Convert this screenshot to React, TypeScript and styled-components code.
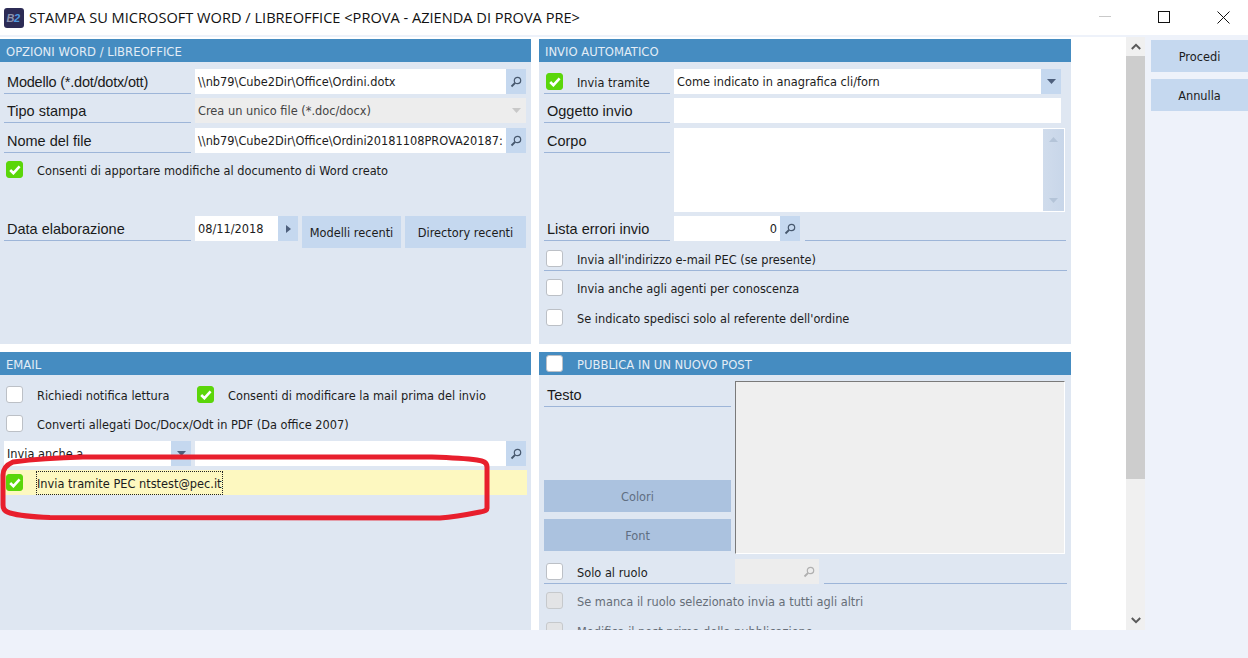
import React from "react";
import styled, { createGlobalStyle } from "styled-components";

const Global = createGlobalStyle`
  html, body { margin: 0; padding: 0; width: 1248px; height: 658px; overflow: hidden; background: #eef2fa; }
  * { box-sizing: border-box; }
`;

const UI = `"DejaVu Sans", "Liberation Sans", sans-serif`;

const Win = styled.div`
  width: 1248px;
  height: 658px;
  display: flex;
  flex-direction: column;
  background: #eef2fa;
  font-family: ${UI};
  font-stretch: condensed;
  font-size: 12.65px;
  color: #1c1c1c;
`;
const TitleBar = styled.header`
  height: 35px;
  flex: none;
  background: #fff;
  display: flex;
  align-items: center;
  padding-left: 4px;
`;
const TitleText = styled.div`
  margin-left: 5px;
  font-family: "Open Sans", sans-serif;
  font-stretch: normal;
  font-size: 14.6px;
  color: #111;
  white-space: nowrap;
  flex: 1;
  padding-bottom: 1px;
`;
const WinControl = styled.div`
  width: 59px;
  height: 35px;
  flex: none;
  padding: 0 0 1px 9px;
  display: flex;
  align-items: center;
  justify-content: center;
`;
const Main = styled.main`
  height: 595px;
  flex: none;
  display: flex;
`;
const ScrollArea = styled.div`
  width: 1126px;
  margin-top: 2px;
  background: #fff;
  overflow: hidden;
  position: relative;
`;
const PanelGrid = styled.div`
  display: grid;
  grid-template-columns: 531px 532px;
  grid-template-rows: 305px 290px;
  column-gap: 8px;
  row-gap: 8px;
  margin-top: 2px;
`;
const Panel = styled.section<{ $pad: number }>`
  background: #dfe7f2;
  padding-left: ${(p) => p.$pad}px;
  display: flex;
  flex-direction: column;
  align-items: flex-start;
`;
const PanelHead = styled.div<{ $pad: number }>`
  height: 23px;
  flex: none;
  align-self: stretch;
  margin-left: -${(p) => p.$pad}px;
  padding: 2px 0 0 6px;
  background: #458cc1;
  color: #e3edf6;
  font-size: 12.9px;
  display: flex;
  align-items: center;
  white-space: nowrap;
`;
const HeadCheck = styled(PanelHead)`
  padding: 0 0 0 7px;
  gap: 14px;
`;
const Row = styled.div<{ $top: number; $gap?: number }>`
  display: flex;
  align-items: flex-start;
  margin-top: ${(p) => p.$top}px;
  gap: ${(p) => p.$gap ?? 4}px;
  flex: none;
`;
const FieldLabel = styled.div<{ $w: number; $tight?: boolean }>`
  width: ${(p) => p.$w}px;
  height: 25px;
  flex: none;
  border-bottom: 1px solid #9db5d8;
  font-family: "Liberation Sans", sans-serif;
  font-stretch: normal;
  font-size: 14.5px;
  letter-spacing: ${(p) => (p.$tight ? "-0.2px" : "0")};
  line-height: 27px;
  padding-left: 3px;
  color: #1a1a1a;
  white-space: nowrap;
`;
const CheckLabelCell = styled.div<{ $w: number }>`
  width: ${(p) => p.$w}px;
  height: 25px;
  flex: none;
  border-bottom: 1px solid #9db5d8;
  padding: 4px 0 0 2px;
  display: flex;
  align-items: flex-start;
  gap: 14px;
`;
const CellText = styled.span`
  line-height: 19px;
  white-space: nowrap;
`;
const Rule = styled.div<{ $w: number }>`
  width: ${(p) => p.$w}px;
  height: 25px;
  flex: none;
  margin-left: 1px;
  border-bottom: 1px solid #9db5d8;
`;
const Input = styled.div<{ $w: number; $gray?: boolean; $right?: boolean }>`
  width: ${(p) => p.$w}px;
  height: 25px;
  flex: none;
  background: ${(p) => (p.$gray ? "#ededed" : "#fff")};
  color: ${(p) => (p.$gray ? "#444" : "#1c1c1c")};
  padding: 0 3px;
  line-height: 26px;
  white-space: nowrap;
  overflow: hidden;
  text-align: ${(p) => (p.$right ? "right" : "left")};
`;
const Joined = styled.div`
  display: flex;
  flex: none;
`;
const SideBtn = styled.div<{ $gray?: boolean }>`
  width: 20px;
  height: 25px;
  flex: none;
  background: ${(p) => (p.$gray ? "#ededed" : "#c5d8ef")};
  display: flex;
  align-items: center;
  justify-content: center;
`;
const PushBtn = styled.div<{ $w: number; $off?: boolean }>`
  width: ${(p) => p.$w}px;
  height: 32px;
  flex: none;
  padding-top: ${(p) => (p.$off ? 1 : 0)}px;
  background: ${(p) => (p.$off ? "#abc2df" : "#c5d8ef")};
  color: ${(p) => (p.$off ? "#5f6e82" : "#1c1c1c")};
  display: flex;
  align-items: center;
  justify-content: center;
`;
const CheckItem = styled.div<{ $left?: number; $off?: boolean; $w?: number }>`
  display: flex;
  align-items: center;
  gap: 14px;
  height: 17px;
  margin-left: ${(p) => p.$left ?? 0}px;
  ${(p) => (p.$w ? `width: ${p.$w}px;` : "")}
  white-space: nowrap;
  color: ${(p) => (p.$off ? "#666e78" : "#1c1c1c")};
`;
const CheckText = styled.span`
  padding-top: 2px;
`;
const Box = styled.span<{ $on?: boolean; $off?: boolean }>`
  width: 17px;
  height: 17px;
  flex: none;
  border-radius: 3px;
  border: 1px solid ${(p) => (p.$on ? "#5bd60a" : p.$off ? "#c6c9cc" : "#bcc0c6")};
  background: ${(p) => (p.$on ? "#5bd60a" : p.$off ? "#e3e4e6" : "#fff")};
  display: inline-flex;
  align-items: center;
  justify-content: center;
`;
const CheckRuleRow = styled.div<{ $top: number }>`
  width: 523px;
  height: 26px;
  margin-top: ${(p) => p.$top}px;
  padding: 5px 0 0 2px;
  border-bottom: 1px solid #9db5d8;
  flex: none;
`;
const YellowBar = styled.div`
  width: 523px;
  height: 25px;
  margin-top: 4px;
  background: #fdf8c0;
  display: flex;
  align-items: center;
  padding-left: 2px;
  gap: 14px;
  flex: none;
`;
const FocusText = styled.span`
  outline: 1px dotted #222;
  line-height: 23px;
  height: 22px;
  white-space: nowrap;
`;
const MemoBox = styled.div`
  width: 391px;
  height: 84px;
  flex: none;
  background: #fff;
  display: flex;
  justify-content: flex-end;
  padding: 1px;
`;
const MemoBar = styled.div`
  width: 21px;
  background: linear-gradient(90deg, #d0dcec, #c8d6e9);
  display: flex;
  flex-direction: column;
  justify-content: space-between;
  align-items: center;
  padding: 8px 0;
`;
const Column = styled.div`
  display: flex;
  flex-direction: column;
  flex: none;
  width: 187px;
  padding-top: 1px;
`;
const FontBtnStack = styled.div`
  display: flex;
  flex-direction: column;
  gap: 7px;
  margin-top: 73px;
`;
const Preview = styled.div`
  width: 330px;
  height: 173px;
  flex: none;
  background: #efefef;
  border-top: 1px solid #7a7a7a;
  border-left: 1px solid #7a7a7a;
  border-right: 1px solid #fff;
  border-bottom: 1px solid #fff;
`;
const ScrollBar = styled.div`
  width: 19px;
  margin-top: 2px;
  background: #f0f0f0;
  display: flex;
  flex-direction: column;
  flex: none;
`;
const ScrollBtn = styled.div`
  height: 19px;
  flex: none;
  display: flex;
  align-items: center;
  justify-content: center;
`;
const Thumb = styled.div`
  height: 423px;
  background: #cdcdcd;
  flex: none;
`;
const Spacer = styled.div`
  flex: 1;
`;
const Side = styled.aside`
  flex: 1;
  padding: 5px 0 0 6px;
  display: flex;
  flex-direction: column;
  gap: 7px;
`;
const RedMark = styled.svg`
  position: absolute;
  left: 0;
  top: 415px;
  pointer-events: none;
`;

const Search = ({ c = "#47586e" }: { c?: string }) => (
  <svg width="12" height="12" viewBox="0 0 12 12" fill="none" stroke={c}>
    <circle cx="7.5" cy="4.5" r="3.2" strokeWidth="1.2" />
    <path d="M5 7 L1.5 10.5" strokeWidth="1.8" />
  </svg>
);
const Down = ({ c = "#4d5f7c" }: { c?: string }) => (
  <svg width="9" height="5" viewBox="0 0 9 5">
    <path d="M0 0H9L4.5 5Z" fill={c} />
  </svg>
);
const Up = ({ c }: { c: string }) => (
  <svg width="9" height="5" viewBox="0 0 9 5">
    <path d="M0 5H9L4.5 0Z" fill={c} />
  </svg>
);
const Tick = () => (
  <svg width="12" height="10" viewBox="0 0 12 10" fill="none">
    <path d="M1.2 5 L4.4 8.2 L10.6 1.4" stroke="#fff" strokeWidth="2.6" />
  </svg>
);
const Check = ({ on, off }: { on?: boolean; off?: boolean }) => (
  <Box $on={on} $off={off}>{on && <Tick />}</Box>
);
const Chevron = ({ up }: { up?: boolean }) => (
  <svg width="10" height="7" viewBox="0 0 10 7" fill="none">
    <path d={up ? "M0.8 6 L5 1.8 L9.2 6" : "M0.8 1 L5 5.2 L9.2 1"} stroke="#5a5a5a" strokeWidth="2" />
  </svg>
);

export default function App() {
  return (
    <Win>
      <Global />
      <TitleBar>
        <svg width="20" height="20" viewBox="0 0 20 20">
          <rect width="20" height="20" rx="3" fill="#2c2b55" />
          <text x="2.5" y="14" fontFamily="Liberation Sans" fontStyle="italic" fontWeight="700" fontSize="11" fill="#8c93ad">B</text>
          <text x="10" y="14" fontFamily="Liberation Sans" fontStyle="italic" fontWeight="700" fontSize="11" fill="#4f9be0">2</text>
        </svg>
        <TitleText>STAMPA SU MICROSOFT WORD / LIBREOFFICE &lt;PROVA - AZIENDA DI PROVA PRE&gt;</TitleText>
        <WinControl>
          <svg width="12" height="2" viewBox="0 0 12 2"><path d="M0 .5H12" stroke="#c9c9c9" /></svg>
        </WinControl>
        <WinControl>
          <svg width="13" height="13" viewBox="0 0 13 13" fill="none"><rect x=".5" y=".5" width="11" height="11" stroke="#111" /></svg>
        </WinControl>
        <WinControl>
          <svg width="13" height="13" viewBox="0 0 13 13" fill="none"><path d="M.5 .5L12.5 12.5M12.5 .5L.5 12.5" stroke="#111" /></svg>
        </WinControl>
      </TitleBar>
      <Main>
        <ScrollArea>
          <PanelGrid>
            <Panel $pad={4}>
              <PanelHead $pad={4}>OPZIONI WORD / LIBREOFFICE</PanelHead>
              <Row $top={7}>
                <FieldLabel $w={187} $tight>Modello (*.dot/dotx/ott)</FieldLabel>
                <Joined>
                  <Input $w={311}>\\nb79\Cube2Dir\Office\Ordini.dotx</Input>
                  <SideBtn><Search /></SideBtn>
                </Joined>
              </Row>
              <Row $top={4}>
                <FieldLabel $w={187}>Tipo stampa</FieldLabel>
                <Joined>
                  <Input $w={311} $gray>Crea un unico file (*.doc/docx)</Input>
                  <SideBtn $gray><Down c="#c8c8c8" /></SideBtn>
                </Joined>
              </Row>
              <Row $top={5}>
                <FieldLabel $w={187}>Nome del file</FieldLabel>
                <Joined>
                  <Input $w={311}>\\nb79\Cube2Dir\Office\Ordini20181108PROVA20187:</Input>
                  <SideBtn><Search /></SideBtn>
                </Joined>
              </Row>
              <Row $top={8}>
                <CheckItem $left={2}><Check on /><CheckText>Consenti di apportare modifiche al documento di Word creato</CheckText></CheckItem>
              </Row>
              <Row $top={38}>
                <FieldLabel $w={187}>Data elaborazione</FieldLabel>
                <Joined>
                  <Input $w={83}>08/11/2018</Input>
                  <SideBtn>
                    <svg width="5" height="8" viewBox="0 0 5 8"><path d="M0 0L5 4L0 8Z" fill="#4d5f7c" /></svg>
                  </SideBtn>
                </Joined>
                <PushBtn $w={99}>Modelli recenti</PushBtn>
                <PushBtn $w={121}>Directory recenti</PushBtn>
              </Row>
            </Panel>

            <Panel $pad={5}>
              <PanelHead $pad={5}>INVIO AUTOMATICO</PanelHead>
              <Row $top={7}>
                <CheckLabelCell $w={126}><Check on /><CellText>Invia tramite</CellText></CheckLabelCell>
                <Joined>
                  <Input $w={367}>Come indicato in anagrafica cli/forn</Input>
                  <SideBtn><Down /></SideBtn>
                </Joined>
              </Row>
              <Row $top={4}>
                <FieldLabel $w={126}>Oggetto invio</FieldLabel>
                <Input $w={387} />
              </Row>
              <Row $top={5}>
                <FieldLabel $w={126}>Corpo</FieldLabel>
                <MemoBox>
                  <MemoBar>
                    <Up c="#b4c4d8" />
                    <Down c="#b4c4d8" />
                  </MemoBar>
                </MemoBox>
              </Row>
              <Row $top={4}>
                <FieldLabel $w={126}>Lista errori invio</FieldLabel>
                <Joined>
                  <Input $w={106} $right>0</Input>
                  <SideBtn><Search /></SideBtn>
                </Joined>
                <Rule $w={261} />
              </Row>
              <CheckRuleRow $top={4}>
                <CheckItem><Check /><CheckText>Invia all'indirizzo e-mail PEC (se presente)</CheckText></CheckItem>
              </CheckRuleRow>
              <Row $top={8}>
                <CheckItem $left={2}><Check /><CheckText>Invia anche agli agenti per conoscenza</CheckText></CheckItem>
              </Row>
              <Row $top={13}>
                <CheckItem $left={2}><Check /><CheckText>Se indicato spedisci solo al referente dell'ordine</CheckText></CheckItem>
              </Row>
            </Panel>

            <Panel $pad={4}>
              <PanelHead $pad={4}>EMAIL</PanelHead>
              <Row $top={11} $gap={0}>
                <CheckItem $left={2} $w={191}><Check /><CheckText>Richiedi notifica lettura</CheckText></CheckItem>
                <CheckItem><Check on /><CheckText>Consenti di modificare la mail prima del invio</CheckText></CheckItem>
              </Row>
              <Row $top={12}>
                <CheckItem $left={2}><Check /><CheckText>Converti allegati Doc/Docx/Odt in PDF (Da office 2007)</CheckText></CheckItem>
              </Row>
              <Row $top={9}>
                <Joined>
                  <Input $w={167}>Invia anche a</Input>
                  <SideBtn><Down /></SideBtn>
                </Joined>
                <Joined>
                  <Input $w={311} />
                  <SideBtn><Search /></SideBtn>
                </Joined>
              </Row>
              <YellowBar>
                <Check on />
                <FocusText>Invia tramite PEC ntstest@pec.it</FocusText>
              </YellowBar>
            </Panel>

            <Panel $pad={5}>
              <HeadCheck $pad={5}><Check /><CheckText>PUBBLICA IN UN NUOVO POST</CheckText></HeadCheck>
              <Row $top={6}>
                <Column>
                  <FieldLabel $w={187}>Testo</FieldLabel>
                  <FontBtnStack>
                    <PushBtn $w={187} $off>Colori</PushBtn>
                    <PushBtn $w={187} $off>Font</PushBtn>
                  </FontBtnStack>
                </Column>
                <Preview />
              </Row>
              <Row $top={5}>
                <CheckLabelCell $w={187}><Check /><CellText>Solo al ruolo</CellText></CheckLabelCell>
                <Joined>
                  <Input $w={64} $gray />
                  <SideBtn $gray><Search c="#b0b0b0" /></SideBtn>
                </Joined>
                <Rule $w={243} />
              </Row>
              <Row $top={8}>
                <CheckItem $left={2} $off><Check off /><CheckText>Se manca il ruolo selezionato invia a tutti agli altri</CheckText></CheckItem>
              </Row>
              <Row $top={13}>
                <CheckItem $left={2} $off><Check off /><CheckText>Modifica il post prima della pubblicazione</CheckText></CheckItem>
              </Row>
            </Panel>
          </PanelGrid>
          <RedMark width="495" height="70" viewBox="0 0 495 70" fill="none">
            <path
              d="M3 53 C3 58 6 60 10 61 C20 64 35 65 50 65.5 L440 66 C455 65 470 62 480 60 C486 59 487 58 487 56 L487 15 C487 10 483 9 477 8 C462 6 445 5.5 430 5 L83 5 C60 5.5 35 7 13 10 C6 13 3 18 3 23Z"
              stroke="#e81f2d"
              strokeWidth="5"
            />
          </RedMark>
        </ScrollArea>
        <ScrollBar>
          <ScrollBtn><Chevron up /></ScrollBtn>
          <Thumb />
          <Spacer />
          <ScrollBtn><Chevron /></ScrollBtn>
        </ScrollBar>
        <Side>
          <PushBtn $w={97}>Procedi</PushBtn>
          <PushBtn $w={97}>Annulla</PushBtn>
        </Side>
      </Main>
    </Win>
  );
}
